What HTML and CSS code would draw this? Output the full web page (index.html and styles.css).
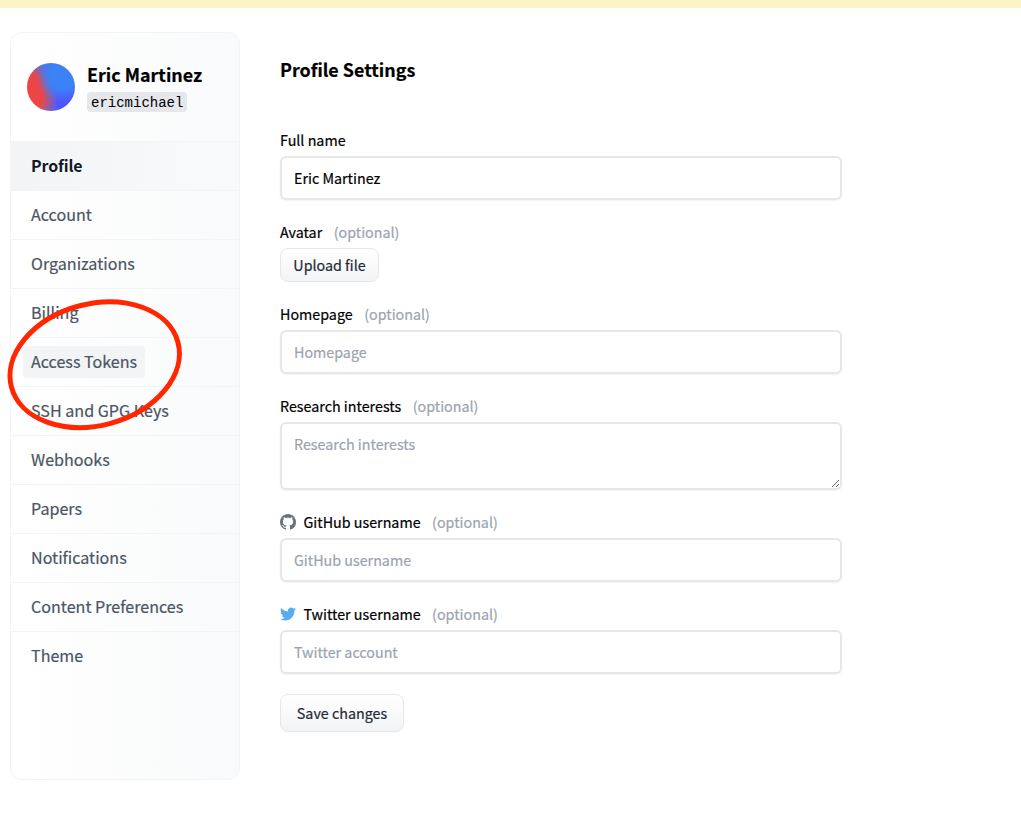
FILE: index.html
```
<!DOCTYPE html>
<html lang="en">
<head>
<meta charset="utf-8">
<title>Profile Settings</title>
<link rel="stylesheet" href="styles.css">
</head>
<body>
<div class="banner"></div>
<div class="page">
  <aside class="sidebar">
    <header class="user">
      <div class="avatar"></div>
      <div class="identity">
        <h2 class="user-name">Eric Martinez</h2>
        <code class="handle">ericmichael</code>
      </div>
    </header>
    <nav class="menu">
      <a class="item active"><span class="text">Profile</span></a>
      <a class="item"><span class="text">Account</span></a>
      <a class="item"><span class="text">Organizations</span></a>
      <a class="item"><span class="text">Billing</span></a>
      <a class="item"><span class="text marked">Access Tokens</span></a>
      <a class="item"><span class="text">SSH and GPG Keys</span></a>
      <a class="item"><span class="text">Webhooks</span></a>
      <a class="item"><span class="text">Papers</span></a>
      <a class="item"><span class="text">Notifications</span></a>
      <a class="item"><span class="text">Content Preferences</span></a>
      <a class="item"><span class="text">Theme</span></a>
    </nav>
    <svg class="annotation" width="190" height="150" viewBox="0 0 190 150">
      <ellipse cx="94.7" cy="74.7" rx="86.2" ry="60.8" transform="rotate(-15.2 94.7 74.7)" fill="none" stroke="#ff2600" stroke-width="5"/>
    </svg>
  </aside>
  <main class="content">
    <h1 class="title">Profile Settings</h1>
    <form class="form">
      <div class="field">
        <label class="label">Full name</label>
        <input class="input" value="Eric Martinez">
      </div>
      <div class="field">
        <label class="label">Avatar <span class="optional">(optional)</span></label>
        <button class="button upload" type="button">Upload file</button>
      </div>
      <div class="field">
        <label class="label">Homepage <span class="optional">(optional)</span></label>
        <input class="input" placeholder="Homepage">
      </div>
      <div class="field">
        <label class="label">Research interests <span class="optional">(optional)</span></label>
        <textarea class="input area" placeholder="Research interests"></textarea>
      </div>
      <div class="field">
        <label class="label">
          <svg class="icon github" viewBox="0 0 16 16"><path fill="currentColor" d="M8 0C3.58 0 0 3.58 0 8c0 3.54 2.29 6.53 5.47 7.59.4.07.55-.17.55-.38 0-.19-.01-.82-.01-1.49-2.01.37-2.53-.49-2.69-.94-.09-.23-.48-.94-.82-1.13-.28-.15-.68-.52-.01-.53.63-.01 1.08.58 1.23.82.72 1.21 1.87.87 2.33.66.07-.52.28-.87.51-1.07-1.78-.2-3.64-.89-3.64-3.95 0-.87.31-1.59.82-2.15-.08-.2-.36-1.02.08-2.12 0 0 .67-.21 2.2.82.64-.18 1.32-.27 2-.27s1.36.09 2 .27c1.53-1.04 2.2-.82 2.2-.82.44 1.1.16 1.92.08 2.12.51.56.82 1.27.82 2.15 0 3.07-1.87 3.75-3.65 3.95.29.25.54.73.54 1.48 0 1.07-.01 1.93-.01 2.2 0 .21.15.46.55.38A8.01 8.01 0 0 0 16 8c0-4.42-3.58-8-8-8z"/></svg>
          GitHub username <span class="optional">(optional)</span></label>
        <input class="input" placeholder="GitHub username">
      </div>
      <div class="field">
        <label class="label">
          <svg class="icon twitter" viewBox="0 0 24 24"><path fill="currentColor" d="M23.953 4.57a10 10 0 0 1-2.825.775 4.958 4.958 0 0 0 2.163-2.723c-.951.555-2.005.959-3.127 1.184a4.92 4.92 0 0 0-8.384 4.482C7.69 8.095 4.067 6.13 1.64 3.162a4.822 4.822 0 0 0-.666 2.475c0 1.71.87 3.213 2.188 4.096a4.904 4.904 0 0 1-2.228-.616v.06a4.923 4.923 0 0 0 3.946 4.827 4.996 4.996 0 0 1-2.212.085 4.936 4.936 0 0 0 4.604 3.417 9.867 9.867 0 0 1-6.102 2.105c-.39 0-.779-.023-1.17-.067a13.995 13.995 0 0 0 7.557 2.209c9.053 0 13.998-7.496 13.998-13.985 0-.21 0-.42-.015-.63A9.935 9.935 0 0 0 24 4.59z"/></svg>
          Twitter username <span class="optional">(optional)</span></label>
        <input class="input" placeholder="Twitter account">
      </div>
      <button class="button save" type="button">Save changes</button>
    </form>
  </main>
</div>
</body>
</html>
```

FILE: styles.css
```
* { box-sizing: border-box; }
body {
  margin: 0;
  background: #fff;
  color: #000;
  font-family: "Noto Sans CJK SC", "Noto Sans", sans-serif;
  font-size: 14.3px;
  -webkit-text-stroke: .2px;
}
.banner { height: 8px; background: #fef3c7; }
.page { display: flex; align-items: flex-start; gap: 40px; padding: 24px 10px 0; }

.sidebar {
  position: relative;
  width: 230px;
  height: 748px;
  border: 1px solid #f3f4f6;
  border-radius: 12px;
  background: linear-gradient(to right, #fff, #f9fafb);
}
.user { display: flex; align-items: center; gap: 12px; height: 108px; padding: 0 16px; }
.avatar {
  width: 48px;
  height: 48px;
  border-radius: 50%;
  background:
    radial-gradient(circle at 36px 15px, #3b82f6 0, #3b82f6 10px, rgba(59,130,246,0) 25px),
    radial-gradient(circle at 4px 36px, #ef4444 0, #ef4444 11px, rgba(239,68,68,0) 27px),
    radial-gradient(circle at 0 18px, #ef4444 0, #ef4444 8px, rgba(239,68,68,0) 22px),
    radial-gradient(circle at 38px 38px, #4f55ff 0, #4f55ff 8px, rgba(79,85,255,0) 22px),
    #4379f0;
}
.identity { display: flex; flex-direction: column; align-items: flex-start; }
.user-name { margin: 0; font-size: 17.9px; line-height: 24px; font-weight: 700; }
.handle {
  height: 20px;
  margin-top: 6px;
  padding: 0 4px;
  border-radius: 4px;
  background: #e5e7eb;
  font: 14px/22px "Liberation Mono", monospace;
  -webkit-text-stroke: 0;
}
.item {
  display: flex;
  align-items: center;
  height: 49px;
  padding-left: 12px;
  border-top: 1px solid #f3f4f6;
  color: #4b5563;
  font-size: 16.1px;
}
.item.active {
  background: linear-gradient(to right, #f3f4f6, #f9fafb);
  color: #111827;
  font-weight: 600;
  font-size: 15.9px;
  letter-spacing: -.1px;
  -webkit-text-stroke: 0;
}
.text { height: 32px; padding: 0 8px; border-radius: 4px; line-height: 30px; white-space: nowrap; }
.active .text { line-height: 32px; }
.marked { background: #f3f4f6; }
/* Hand-drawn highlight laid over the menu */
.annotation { position: absolute; left: -11px; top: 257px; }

.content { width: 562px; padding-top: 24px; }
.title { margin: 0 0 47px; font-size: 17.9px; line-height: 26px; font-weight: 700; }
.field { display: flex; flex-direction: column; align-items: flex-start; margin-bottom: 21px; }
.label { display: flex; align-items: center; height: 22px; margin-bottom: 5px; line-height: 22px; white-space: nowrap; }
.optional { margin-left: 11.5px; color: #9ca3af; }
.icon { flex: none; width: 16px; height: 16px; margin-right: 7.5px; }
.github { color: #6b7280; }
.twitter { color: #55acee; }
.input {
  display: block;
  width: 100%;
  height: 44px;
  padding: 0 12px 2px;
  border: 2px solid #e5e7eb;
  border-radius: 6px;
  outline: 0;
  background: #fff;
  box-shadow: 0 1px 2px rgba(0, 0, 0, .05);
  color: #000;
  font: inherit;
}
.input::placeholder { color: #9ca3af; opacity: 1; }
.area { height: 68px; padding-top: 8px; line-height: 24px; resize: vertical; }
.button {
  border: 1px solid #e5e7eb;
  border-radius: 8px;
  background: linear-gradient(to bottom, #fff, #f3f4f6);
  color: #1f2937;
  font: inherit;
  padding: 0 0 2px;
}
.upload { width: 99px; height: 34px; }
.save { display: block; width: 124px; height: 38px; margin-top: -1px; }
```
